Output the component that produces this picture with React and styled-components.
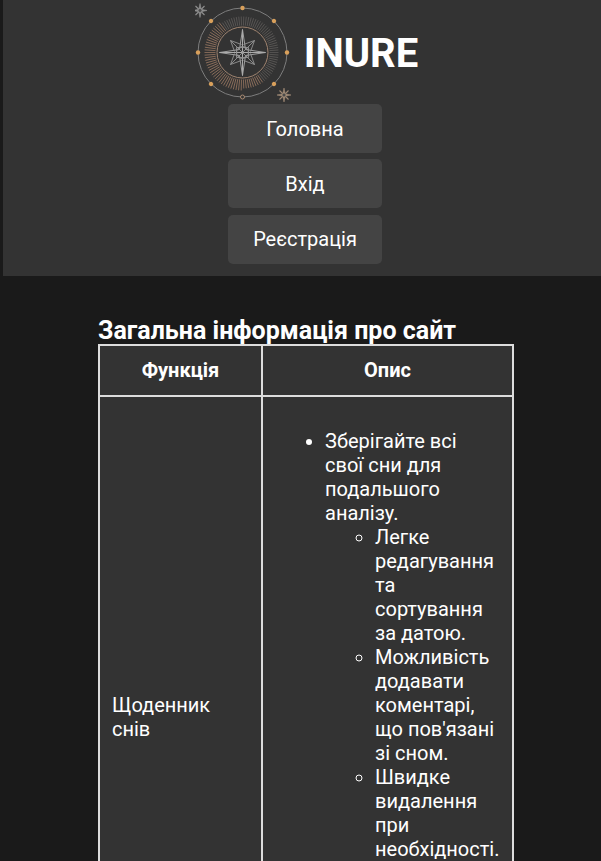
import React from "react";
import styled, { createGlobalStyle } from "styled-components";

const Global = createGlobalStyle`
  html, body { margin: 0; padding: 0; background: #1a1a1a; height: 861px; overflow: hidden; }
  body { font-family: Roboto, "Liberation Sans", sans-serif; color: #fff; }
`;
const Page = styled.div`padding-left: 3px; height: 861px; overflow: hidden;`;
const Header = styled.header`
  background: #333; height: 276px; padding-left: 6px; display: flex; flex-direction: column; align-items: center; box-sizing: border-box;
`;
const Brand = styled.div`display: flex; align-items: center; gap: 9px; height: 104px; padding-left: 3px;`;
const BrandName = styled.h1`margin: 2px 0 0; font-size: 40px; font-weight: 700; line-height: 47px; color: #fff;`;
const Nav = styled.nav`display: flex; flex-direction: column; gap: 6.4px;`;
const NavLink = styled.a`
  display: flex; align-items: center; justify-content: center; width: 154px; height: 49px;
  background: #444; border-radius: 5px; font-size: 20px; color: #fff;
`;
const Main = styled.main`padding: 41px 0 0 95px;`;
const Title = styled.h2`margin: 0; font-size: 25px; font-weight: 700; line-height: 27px;`;
const Table = styled.table`border-collapse: collapse; width: 416px; table-layout: fixed; background: #333; font-size: 20px; line-height: 24px;`;
const Th = styled.th`border: 2px solid #ddd; padding: 11px 12px 13px; font-size: 20px; line-height: 24px; height: 51px; box-sizing: border-box; font-weight: 700; text-align: center;`;
const Td = styled.td`border: 2px solid #ddd; padding: 12px; vertical-align: middle; height: 642px; box-sizing: border-box;`;
const DescCell = styled(Td)`vertical-align: top; padding-right: 13px;`;
const List = styled.ul`margin: 20px 0; padding-left: 50px;`;
const Sub = styled.ul`margin: 0; padding-left: 50px; list-style: circle;`;

const Spark = ({ x, y, color }) => (
  <g transform={`translate(${x} ${y})`} stroke={color} fill={color}>
    <path d="M0 -7L1.2 -1.2L7 0L1.2 1.2L0 7L-1.2 1.2L-7 0L-1.2 -1.2Z" strokeWidth="0.6" />
    <path d="M-4.5 -4.5L4.5 4.5M-4.5 4.5L4.5 -4.5" strokeWidth="1.1" />
    <circle r="2" fill="#4a4a4a" strokeWidth="0.8" />
  </g>
);

const rayColor = a => (a >= 55 && a <= 235 ? "#a37e66" : "#625f5d");
const rayEnd = a => (a >= 90 && a <= 235 ? 38 : 36);

const Logo = () => {
  const rays = Array.from({ length: 90 }, (_, i) => i * 4);
  const dots = [0, 45, 90, 135, 225, 270, 315];
  return (
    <svg width="100" height="104" viewBox="0 0 100 104" fill="none">
      <g transform="translate(47.5 52.5)">
        <circle r="44.5" stroke="#7d7d7d" strokeWidth="1" />
        <circle r="25.5" stroke="#a08470" strokeWidth="1" />
        {rays.map(a => (
          <line key={a} x1="27" x2={rayEnd(a)} transform={`rotate(${a})`} stroke={rayColor(a)} strokeWidth="0.7" />
        ))}
        {dots.map(a => (
          <circle key={a} cx="0" cy="-44.5" r="2.2" fill="#d9a05b" transform={`rotate(${a})`} />
        ))}
        <circle cx="0" cy="44.5" r="2" fill="#333" stroke="#a98a72" />
        <path d="M0 -23 L3 -3 L23 0 L3 3 L0 23 L-3 3 L-23 0 L-3 -3 Z" stroke="#a0a0a0" strokeWidth="1" />
        <path d="M0 -23V23M-23 0H23" stroke="#aaa" strokeWidth="1" />
        <path d="M-12 -12L-1 -8M12 -12L1 -8M-12 12L-1 8M12 12L1 8M-12 -12L-8 -1M12 -12L8 -1M-12 12L-8 1M12 12L8 1M-12 -12L12 12M12 -12L-12 12M-6 -5L6 -5L6 5L-6 5Z" stroke="#949494" strokeWidth="0.9" />
        <circle r="6" stroke="#949494" strokeWidth="0.9" />
      </g>
      <Spark x={5} y={10.5} color="#8f8f8f" />
      <Spark x={89} y={95} color="#a08a75" />
    </svg>
  );
};

export default function App() {
  return (
    <Page>
      <Global />
      <Header>
        <Brand>
          <Logo />
          <BrandName>INURE</BrandName>
        </Brand>
        <Nav>
          <NavLink>Головна</NavLink>
          <NavLink>Вхід</NavLink>
          <NavLink>Реєстрація</NavLink>
        </Nav>
      </Header>
      <Main>
        <Title>Загальна інформація про сайт</Title>
        <Table>
          <colgroup><col style={{ width: 163 }} /><col /></colgroup>
          <thead>
            <tr><Th>Функція</Th><Th>Опис</Th></tr>
          </thead>
          <tbody>
            <tr>
              <Td>Щоденник снів</Td>
              <DescCell>
                <List>
                  <li>
                    Зберігайте всі свої сни для подальшого аналізу.
                    <Sub>
                      <li>Легке редагування та сортування за датою.</li>
                      <li>Можливість додавати коментарі, що пов'язані зі сном.</li>
                      <li>Швидке видалення при необхідності.</li>
                    </Sub>
                  </li>
                </List>
              </DescCell>
            </tr>
          </tbody>
        </Table>
      </Main>
    </Page>
  );
}
